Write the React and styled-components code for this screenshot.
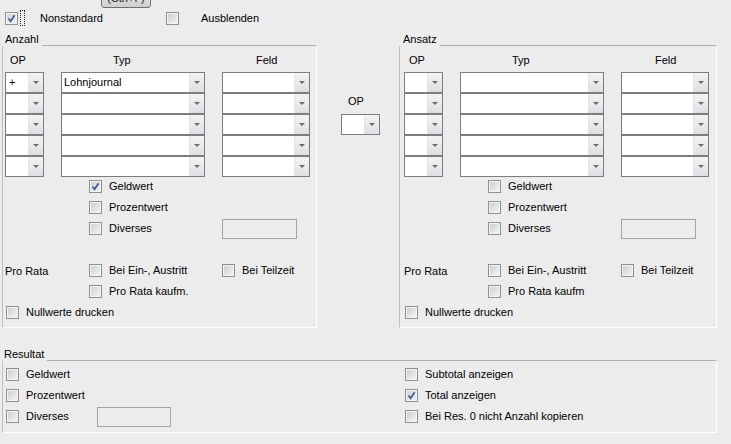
import React from "react";
import styled, { createGlobalStyle } from "styled-components";

const GlobalStyle = createGlobalStyle`
  html, body {
    margin: 0;
    padding: 0;
    background: #ececec;
  }
  * {
    box-sizing: border-box;
  }
`;

const Page = styled.div`
  width: 731px;
  height: 444px;
  overflow: hidden;
  background: #ececec;
  font-family: "Liberation Sans", Arial, sans-serif;
  font-size: 11px;
  color: #000;
`;

const TopStrip = styled.div`
  height: 8px;
  padding-left: 101px;
  display: flex;
  align-items: flex-end;
`;

const CtrlButton = styled.div`
  flex: none;
  width: 50px;
  height: 22px;
  border: 1px solid #707070;
  border-radius: 3px;
  background: linear-gradient(#f2f2f2, #ebebeb 50%, #dddddd 51%, #cfcfcf);
  display: flex;
  align-items: center;
  justify-content: center;
  padding-top: 2px;
  color: #222;
`;

const TopRow = styled.div`
  height: 20px;
  display: flex;
  align-items: center;
  padding-left: 5px;
`;

const Item = styled.label`
  display: flex;
  align-items: center;
  height: 100%;
  width: ${(p) => p.$width || "auto"};
  white-space: nowrap;
`;

const Text = styled.span`
  margin-left: ${(p) => p.$gap ?? 7}px;
  line-height: 13px;
  width: ${(p) => (p.$width ? `${p.$width}px` : "auto")};
`;

const Box = styled.span`
  flex: none;
  width: 13px;
  height: 13px;
  border: 1px solid #8e8f8f;
  background: linear-gradient(135deg, #c9ccd1, #eeeeef 80%);
  box-shadow: inset 0 0 0 1px #f4f4f4;
  display: flex;
  align-items: center;
  justify-content: center;
`;

const FocusRing = styled.span`
  width: 5px;
  height: 16px;
  margin-left: 2px;
  border: 1px dotted #222;
`;

const Check = ({ checked }) => (
  <Box>
    {checked && (
      <svg width="9" height="9" viewBox="0 0 9 9">
        <path
          d="M1.5 4.6 L3.6 7.3 L7.6 1.2"
          fill="none"
          stroke="#3f5a96"
          strokeWidth="1.7"
        />
      </svg>
    )}
  </Box>
);

const CheckItem = ({ label, checked, gap, width, labelWidth, children }) => (
  <Item $width={width}>
    <Check checked={checked} />
    <Text $gap={gap} $width={labelWidth}>
      {label}
    </Text>
    {children}
  </Item>
);

const MainRow = styled.div`
  display: flex;
  margin-top: 5px;
`;

const GroupWrap = styled.div`
  width: ${(p) => p.$width}px;
  flex: none;
  display: flex;
  flex-direction: column;
  align-items: flex-start;
`;

const GroupTitle = styled.div`
  position: relative;
  z-index: 1;
  height: 13px;
  line-height: 13px;
  padding: 0 3px 0 ${(p) => p.$pad}px;
  background: #ececec;
`;

const GroupBox = styled.div`
  margin-top: -1px;
  margin-left: ${(p) => p.$offset}px;
  width: ${(p) => p.$width}px;
  border-top: 1px solid #a9b0ba;
  border-left: 1px solid #bdbfc2;
  border-right: 1px solid #ffffff;
  border-bottom: 1px solid #ffffff;
  padding: ${(p) => p.$padding};
`;

const Group = ({ title, width, pad, offset, boxWidth, padding, children }) => (
  <GroupWrap $width={width}>
    <GroupTitle $pad={pad}>{title}</GroupTitle>
    <GroupBox $offset={offset} $width={boxWidth} $padding={padding}>
      {children}
    </GroupBox>
  </GroupWrap>
);

const Columns = styled.div`
  display: grid;
  grid-template-columns: 39px 144px 88px;
  column-gap: 17px;
`;

const HeaderRow = styled(Columns)`
  height: 13px;
  line-height: 13px;
  margin-top: 8px;
  margin-bottom: 5px;
`;

const Header = styled.div`
  padding-left: ${(p) => p.$shift}px;
`;

const Combo = styled.div`
  height: 21px;
  display: flex;
  border: 1px solid #7d7d7d;
  background: #fff;
`;

const ComboField = styled.div`
  flex: 1;
  padding-left: ${(p) => p.$pad ?? 2}px;
  line-height: 19px;
  overflow: hidden;
  white-space: nowrap;
`;

const ComboButton = styled.div`
  width: 15px;
  flex: none;
  border-left: 1px solid #e4e4e4;
  background: linear-gradient(#f3f3f3, #e9eaec 50%, #dcdfe4);
  display: flex;
  align-items: center;
  justify-content: center;

  &::after {
    content: "";
    width: 0;
    height: 0;
    border-left: 3px solid transparent;
    border-right: 3px solid transparent;
    border-top: 3px solid #6a6a6a;
  }
`;

const ComboBox = ({ value, pad }) => (
  <Combo>
    <ComboField $pad={pad}>{value}</ComboField>
    <ComboButton />
  </Combo>
);

const TextBox = styled.div`
  width: ${(p) => p.$width}px;
  height: 20px;
  border: 1px solid #a3a3a3;
  background: #ececec;
`;

const Options = styled.div`
  display: grid;
  grid-template-columns: 84px 133px 1fr;
  grid-auto-rows: 21px;
  margin-top: -1px;
`;

const Cell = styled.div`
  grid-column: ${(p) => p.$col};
  grid-row: ${(p) => p.$row};
  display: flex;
  align-items: center;
  padding-left: ${(p) => p.$pad || 0}px;
`;

const Middle = styled.div`
  width: 81px;
  flex: none;
  padding: 62px 0 0 24px;
`;

const MiddleLabel = styled.div`
  height: 13px;
  line-height: 13px;
  margin: 0 0 6px 7px;
`;

const MiddleCombo = styled.div`
  width: 39px;
`;

const ResultWrap = styled.div`
  margin-top: 20px;
`;

const ResultGrid = styled.div`
  display: grid;
  grid-template-columns: 399px 1fr;
  grid-auto-rows: 21px;
  padding-left: 3px;
`;

const rows = [0, 1, 2, 3, 4];

const Rechnung = ({ first, checkedGeld, kaufm }) => (
  <>
    <HeaderRow>
      <Header $shift={5}>OP</Header>
      <Header $shift={52}>Typ</Header>
      <Header $shift={34}>Feld</Header>
    </HeaderRow>
    <Columns>
      {rows.map((r) => (
        <React.Fragment key={r}>
          <ComboBox value={r === 0 ? first?.op : ""} pad={3} />
          <ComboBox value={r === 0 ? first?.typ : ""} />
          <ComboBox value="" />
        </React.Fragment>
      ))}
    </Columns>
    <Options>
      <Cell $col={2} $row={1}>
        <CheckItem label="Geldwert" checked={checkedGeld} />
      </Cell>
      <Cell $col={2} $row={2}>
        <CheckItem label="Prozentwert" />
      </Cell>
      <Cell $col={2} $row={3}>
        <CheckItem label="Diverses" />
      </Cell>
      <Cell $col={3} $row={3}>
        <TextBox $width={75} />
      </Cell>
      <Cell $col={1} $row={5}>
        Pro Rata
      </Cell>
      <Cell $col={2} $row={5}>
        <CheckItem label="Bei Ein-, Austritt" />
      </Cell>
      <Cell $col={3} $row={5}>
        <CheckItem label="Bei Teilzeit" />
      </Cell>
      <Cell $col={2} $row={6}>
        <CheckItem label={kaufm} />
      </Cell>
      <Cell $col="1 / -1" $row={7} $pad={1}>
        <CheckItem label="Nullwerte drucken" />
      </Cell>
    </Options>
  </>
);

export default function App() {
  return (
    <Page>
      <GlobalStyle />
      <TopStrip>
        <CtrlButton>(Ctrl+F)</CtrlButton>
      </TopStrip>
      <TopRow>
        <Item $width="161px">
          <Check checked />
          <FocusRing />
          <Text $gap={15}>Nonstandard</Text>
        </Item>
        <CheckItem label="Ausblenden" gap={22} />
      </TopRow>

      <MainRow>
        <Group
          title="Anzahl"
          width={317}
          pad={5}
          offset={2}
          boxWidth={315}
          padding="0 0 4px 2px"
        >
          <Rechnung
            first={{ op: "+", typ: "Lohnjournal" }}
            checkedGeld
            kaufm="Pro Rata kaufm."
          />
        </Group>

        <Middle>
          <MiddleLabel>OP</MiddleLabel>
          <MiddleCombo>
            <ComboBox value="" />
          </MiddleCombo>
        </Middle>

        <Group
          title="Ansatz"
          width={318}
          pad={5}
          offset={1}
          boxWidth={318}
          padding="0 0 4px 4px"
        >
          <Rechnung kaufm="Pro Rata kaufm" />
        </Group>
      </MainRow>

      <ResultWrap>
        <Group
          title="Resultat"
          width={717}
          pad={4}
          offset={2}
          boxWidth={715}
          padding="3px 0 5px 0"
        >
          <ResultGrid>
            <CheckItem label="Geldwert" />
            <CheckItem label="Subtotal anzeigen" />
            <CheckItem label="Prozentwert" />
            <CheckItem label="Total anzeigen" checked />
            <CheckItem label="Diverses" labelWidth={71}>
              <TextBox $width={74} />
            </CheckItem>
            <CheckItem label="Bei Res. 0 nicht Anzahl kopieren" />
          </ResultGrid>
        </Group>
      </ResultWrap>
    </Page>
  );
}
